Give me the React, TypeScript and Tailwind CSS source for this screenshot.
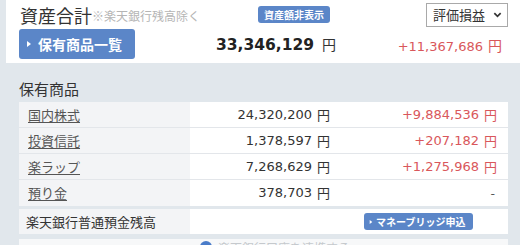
import React from "react";

const jp = { fontFamily: '"Noto Sans CJK JP", "Noto Sans", sans-serif' };
const num = { fontFamily: '"DejaVu Sans", "Noto Sans CJK JP", sans-serif' };

function Tri({ size = 6 }: { size?: number }) {
  return (
    <svg width={size} height={size + 2} viewBox="0 0 6 8" className="shrink-0">
      <path d="M1 1 L5 4 L1 7 Z" fill="white" />
    </svg>
  );
}

type Row = { label: string; amount: string; gain: string };
const rows: Row[] = [
  { label: "国内株式", amount: "24,320,200", gain: "+9,884,536" },
  { label: "投資信託", amount: "1,378,597", gain: "+207,182" },
  { label: "楽ラップ", amount: "7,268,629", gain: "+1,275,968" },
  { label: "預り金", amount: "378,703", gain: "-" },
];

export default function App() {
  return (
    <div className="w-[520px] h-[245px] overflow-hidden bg-[#e1e7ec] text-[#333]" style={jp}>
      <div className="ml-[6px] flex flex-col">
        {/* top white section */}
        <div className="bg-white h-[63px] flex flex-col">
          <div className="flex items-center h-[29px] pl-[14px] pr-[12px]">
            <div className="w-[238px] flex items-end">
              <span className="text-[18px] leading-[22px] text-[#333]">資産合計</span>
              <span className="text-[12px] leading-[16px] text-[#b5b5b5] mb-[2px]">※楽天銀行残高除く</span>
            </div>
            <div className="h-[17px] w-[72px] rounded-[3px] bg-[#5b86c8] text-white text-[10px] font-bold flex items-center justify-center leading-none">
              資産額非表示
            </div>
            <div className="ml-auto h-[24px] w-[82px] border border-[#a9a9a9] flex items-center pl-[6px] pr-[5px] text-[13px] text-[#333] whitespace-nowrap">
              <span>評価損益</span>
              <svg width="9" height="8" viewBox="0 0 10 8" className="ml-auto shrink-0">
                <path d="M1.5 2 L5 5.5 L8.5 2" fill="none" stroke="#333" strokeWidth="1.9" />
              </svg>
            </div>
          </div>
          <div className="flex items-center h-[30px] pl-[13px]">
            <div className="w-[116px] h-[30px] rounded-[3px] bg-[#5b86c8] flex items-center pl-[7px] gap-[6px] text-white text-[14px] font-bold">
              <Tri />
              <span>保有商品一覧</span>
            </div>
            <div className="w-[201px] text-right whitespace-nowrap">
              <span className="text-[15.5px] font-bold text-[#222]" style={num}>33,346,129</span>
              <span className="text-[14px] text-[#333] ml-[8px]">円</span>
            </div>
            <div className="w-[166px] text-right text-[#d9575b] whitespace-nowrap">
              <span className="text-[13px]" style={num}>+11,367,686</span>
              <span className="text-[14px] ml-[5px]">円</span>
            </div>
          </div>
        </div>
        {/* gray section */}
        <div className="pl-[13px] pr-[12px] pt-[16px]">
          <div className="text-[15px] leading-[20px] text-[#333] mb-[3px]">保有商品</div>
          <div className="flex flex-col">
            {rows.map((r, i) => (
              <div key={r.label} className={`flex h-[26px] ${i < rows.length - 1 ? "border-b border-[#e3e6ea]" : ""}`}>
                <div className="w-[171px] bg-[#f3f4f6] flex items-center pl-[9px] text-[13px] text-[#555] underline underline-offset-[2px]">
                  {r.label}
                </div>
                <div className="w-[150px] bg-white flex items-center justify-end pr-[10px] text-[13px] text-[#333]">
                  <span style={num}>{r.amount}</span>
                  <span className="ml-[5px]">円</span>
                </div>
                <div className="flex-1 bg-white flex items-center justify-end pr-[11px] text-[13px] text-[#d9575b]">
                  {r.gain === "-" ? (
                    <span className="text-[#555] pr-[2px]">-</span>
                  ) : (
                    <>
                      <span style={num}>{r.gain}</span>
                      <span className="ml-[5px]">円</span>
                    </>
                  )}
                </div>
              </div>
            ))}
          </div>
          <div className="flex h-[25px] mt-[3px]">
            <div className="w-[171px] bg-[#f3f4f6] flex items-center pl-[7px] text-[13px] text-[#333]">
              楽天銀行普通預金残高
            </div>
            <div className="flex-1 bg-white flex items-center pl-[174px]">
              <div className="h-[17px] w-[109px] rounded-[3px] bg-[#5b86c8] flex items-center pl-[5px] gap-[3px] text-white text-[10px] font-bold leading-none">
                <Tri size={4} />
                <span>マネーブリッジ申込</span>
              </div>
            </div>
          </div>
          <div className="flex h-[25px] mt-[5px] bg-[#f7f8f9] pt-[3px]">
            <div className="w-[171px]" />
            <div className="w-[12px] h-[12px] rounded-full bg-[#4a7cc9] mt-[-1px] ml-[10px]" />
            <span className="ml-[6px] text-[12px] text-[#c5c9cd] leading-[12px]">楽天銀行口座を連携する</span>
          </div>
        </div>
      </div>
    </div>
  );
}
